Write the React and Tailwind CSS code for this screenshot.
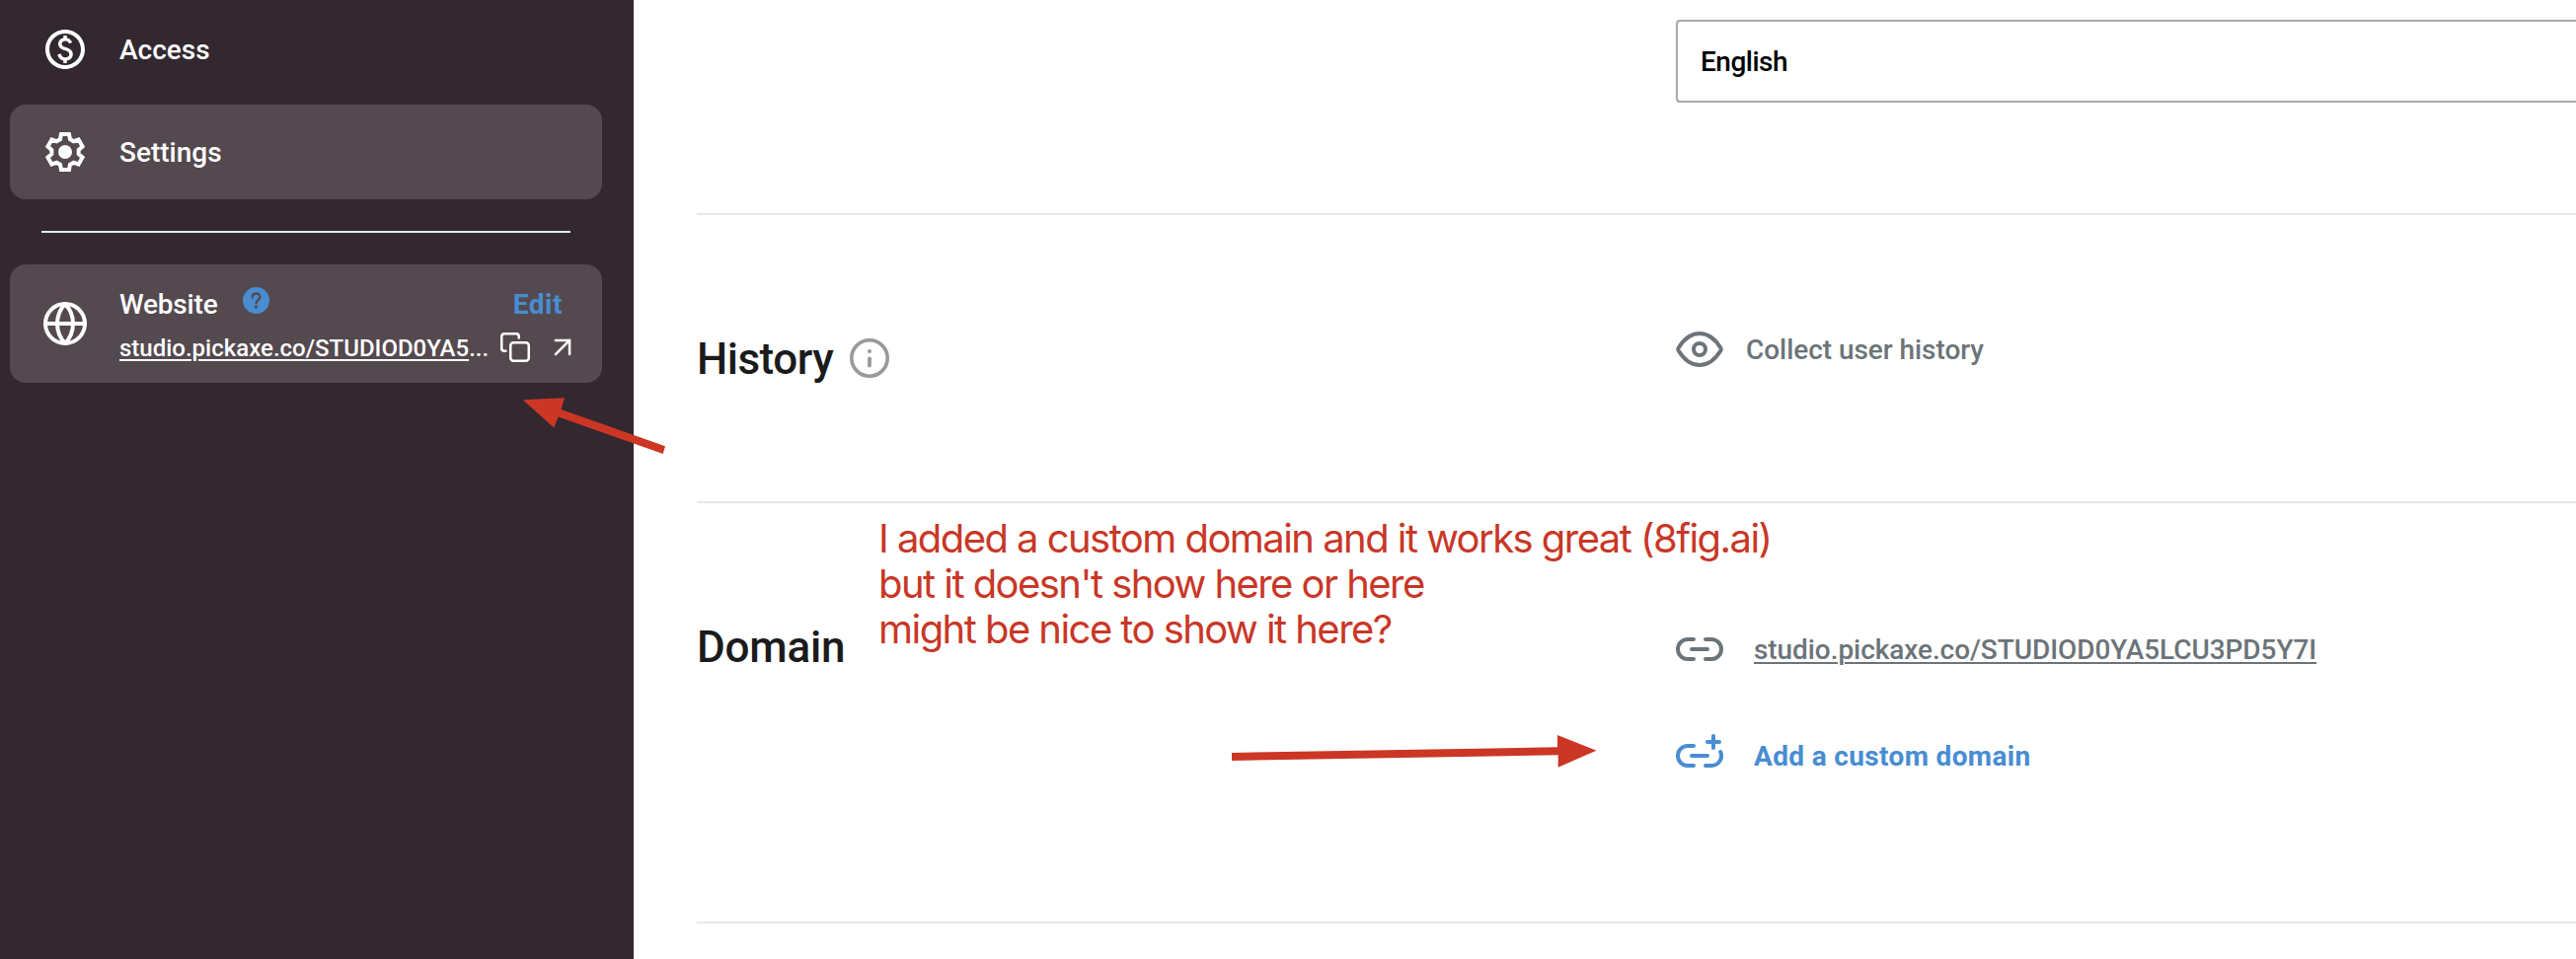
import { ArrowUpRight, Globe } from 'lucide-react'
import { MdOutlinePaid } from 'react-icons/md'

function GearIcon() {
  return (
    <svg className="h-12 w-12" viewBox="-24 -24 48 48" fill="none">
      <path
        d="M-5-12.9-4-18H4L5-12.9 8.67-10.78 13.59-12.46 17.59-5.54 13.67-2.12V2.12L17.59 5.54 13.59 12.46 8.67 10.78 5 12.9 4 18H-4L-5 12.9-8.67 10.78-13.59 12.46-17.59 5.54-13.67 2.12V-2.12L-17.59-5.54-13.59-12.46-8.67-10.78z"
        stroke="currentColor"
        strokeWidth="4"
      />
      <circle r="7" fill="currentColor" />
    </svg>
  )
}

function HelpIcon() {
  return (
    <svg className="h-[27px] w-[27px]" viewBox="0 0 27 27" fill="none">
      <circle cx="13.5" cy="13.5" r="13.5" fill="#488dd2" />
      <path
        d="M9.7 10.4c0-2.4 1.6-3.9 3.8-3.9s3.9 1.4 3.9 3.5c0 3.1-3.8 3.2-3.8 6.2"
        stroke="#54494f"
        strokeWidth="2.4"
        strokeLinecap="round"
      />
      <circle cx="13.5" cy="20" r="1.7" fill="#54494f" />
    </svg>
  )
}

function CopyIcon() {
  return (
    <svg className="h-[30px] w-[30px]" viewBox="0 0 30 30" fill="none" stroke="currentColor" strokeWidth="2.5" strokeLinecap="round">
      <rect x="10.25" y="10.25" width="18.5" height="18.5" rx="3" />
      <path d="M5.5 18.75H4A2.75 2.75 0 0 1 1.25 16V4A2.75 2.75 0 0 1 4 1.25h12A2.75 2.75 0 0 1 18.75 4v1.5" />
    </svg>
  )
}

function InfoIcon() {
  return (
    <svg className="h-10 w-10 text-[#999999]" viewBox="0 0 40 40" fill="none">
      <circle cx="20" cy="20" r="18.2" stroke="currentColor" strokeWidth="3.6" />
      <circle cx="20" cy="13" r="2" fill="currentColor" />
      <path d="M20 20.3v7.2" stroke="currentColor" strokeWidth="3.8" strokeLinecap="round" />
    </svg>
  )
}

function EyeIcon() {
  return (
    <svg className="h-9 w-12" viewBox="0 0 48 36" fill="none" stroke="currentColor" strokeWidth="4">
      <path d="M2.7 19.5a2.8 2.8 0 0 1 0-3C8 8 15.5 2 24 2s16 6 21.3 14.5a2.8 2.8 0 0 1 0 3C40 28 32.5 34 24 34S8 28 2.7 19.5z" />
      <circle cx="24" cy="18" r="6" />
    </svg>
  )
}

function LinkIcon() {
  return (
    <svg className="h-6 w-12" viewBox="0 0 48 24" fill="none" stroke="currentColor" strokeWidth="4" strokeLinecap="round">
      <path d="M18 2h-6a10 10 0 0 0 0 20h6M30 2h6a10 10 0 0 1 0 20h-6M16 12h16" />
    </svg>
  )
}

function AddLinkIcon() {
  return (
    <svg className="h-[34px] w-12" viewBox="0 0 48 34" fill="none" stroke="currentColor" strokeWidth="4" strokeLinecap="round">
      <path d="M18 12h-6a10 10 0 0 0 0 20h6M16 22h16M30 32h6a10 10 0 0 0 9.2-14" />
      <path d="M38 2v12M32 8h12" />
    </svg>
  )
}

function Sidebar() {
  return (
    <aside className="w-[642px] shrink-0 bg-[#332830] pt-0.5 pl-2.5 text-[28px] font-medium text-white">
      <div className="flex h-24 w-[600px] items-center pl-8">
        <MdOutlinePaid className="h-12 w-12" />
        <span className="mt-0.5 ml-[31px]">Access</span>
      </div>
      <div className="mt-2 flex h-24 w-[600px] items-center rounded-2xl bg-[#54494f] pl-8">
        <GearIcon />
        <span className="mt-0.5 ml-[31px]">Settings</span>
      </div>
      <hr className="mt-8 ml-8 w-[536px] border-t-2 border-[#e2e8f0]" />
      <div className="mt-8 flex h-[120px] w-[600px] items-center rounded-2xl bg-[#54494f] pl-8">
        <Globe className="h-12 w-12" strokeWidth={2} />
        <div className="ml-[31px] w-[458px] pt-1">
          <div className="flex h-10 items-center">
            <span className="mt-0.5 -tracking-[0.2px]">Website</span>
            <span className="mb-2 ml-[26px]">
              <HelpIcon />
            </span>
            <span className="mt-0.5 mr-[9px] ml-auto font-bold tracking-[0.5px] text-[#488dd2]">Edit</span>
          </div>
          <div className="mt-1 flex h-10 items-center">
            <span className="w-[386px] pt-px text-2xl">
              <span className="underline decoration-2 underline-offset-[3px]">studio.pickaxe.co/STUDIOD0YA5</span>...
            </span>
            <CopyIcon />
            <ArrowUpRight className="-mr-2 ml-auto h-[34px] w-[34px] shrink-0" strokeWidth={1.8} />
          </div>
        </div>
      </div>
    </aside>
  )
}

function Annotations() {
  return (
    <>
      <p className="absolute top-[523px] left-[890px] font-['Inter',sans-serif] text-[40px] leading-[46px] whitespace-nowrap text-[#c83727] -tracking-[1.55px]">
        I added a custom domain and it works great (8fig.ai)
        <br />
        but it doesn't show here or here
        <br />
        might be nice to show it here?
      </p>
      <svg className="absolute top-[400px] left-[525px] h-[65px] w-[155px]" viewBox="525 400 155 65" fill="#cc3625">
        <path d="M529.7 405.3 572 403.3 568.5 415 674 452.3 671.7 460 565.7 422.5 561.3 433.5z" />
      </svg>
      <svg className="absolute top-[740px] left-[1240px] h-10 w-[385px]" viewBox="1240 740 385 40" fill="#cc3625">
        <path d="M1248 763 1578 757.3V745L1617.5 760.7 1578.7 777.7V765.3L1248 771z" />
      </svg>
    </>
  )
}

export default function App() {
  return (
    <div className="relative flex h-[972px] w-[2610px] overflow-hidden bg-white font-['Roboto',sans-serif]">
      <Sidebar />
      <main className="min-w-0 flex-1 pl-16 text-[28px] font-medium text-[#6c7479]">
        <section className="h-[218px] border-b-2 border-[#e6e8e8] pt-5 pl-[992px]">
          <div className="flex h-[84px] items-center rounded-l border-2 border-r-0 border-[#a5abab] pt-0.5 pl-[23px] text-black -tracking-[0.5px]">
            English
          </div>
        </section>

        <section className="flex h-[292px] border-b-2 border-[#e6e8e8]">
          <div className="flex w-[992px] items-center gap-[17px]">
            <h2 className="pt-0.5 text-[44px] text-[#1b1b1b] -tracking-[0.5px]">History</h2>
            <InfoIcon />
          </div>
          <div className="flex h-[272px] items-center gap-[23px]">
            <EyeIcon />
            <span className="mt-0.5 -tracking-[0.05px]">Collect user history</span>
          </div>
        </section>

        <section className="flex h-[426px] border-b-2 border-[#e6e8e8]">
          <div className="flex h-[292px] w-[992px] items-center">
            <h2 className="text-[44px] text-[#1b1b1b] -tracking-[0.2px]">Domain</h2>
          </div>
          <div className="pt-[128px]">
            <div className="flex h-10 items-center gap-[31px]">
              <LinkIcon />
              <span className="mt-0.5 underline decoration-2 underline-offset-[3px] -tracking-[0.07px]">
                studio.pickaxe.co/STUDIOD0YA5LCU3PD5Y7I
              </span>
            </div>
            <div className="mt-[68px] flex h-10 items-center gap-[31px] text-[#488dd2]">
              <span className="mb-2.5">
                <AddLinkIcon />
              </span>
              <span className="mt-0.5 font-bold tracking-[0.35px]">Add a custom domain</span>
            </div>
          </div>
        </section>
      </main>
      <Annotations />
    </div>
  )
}
